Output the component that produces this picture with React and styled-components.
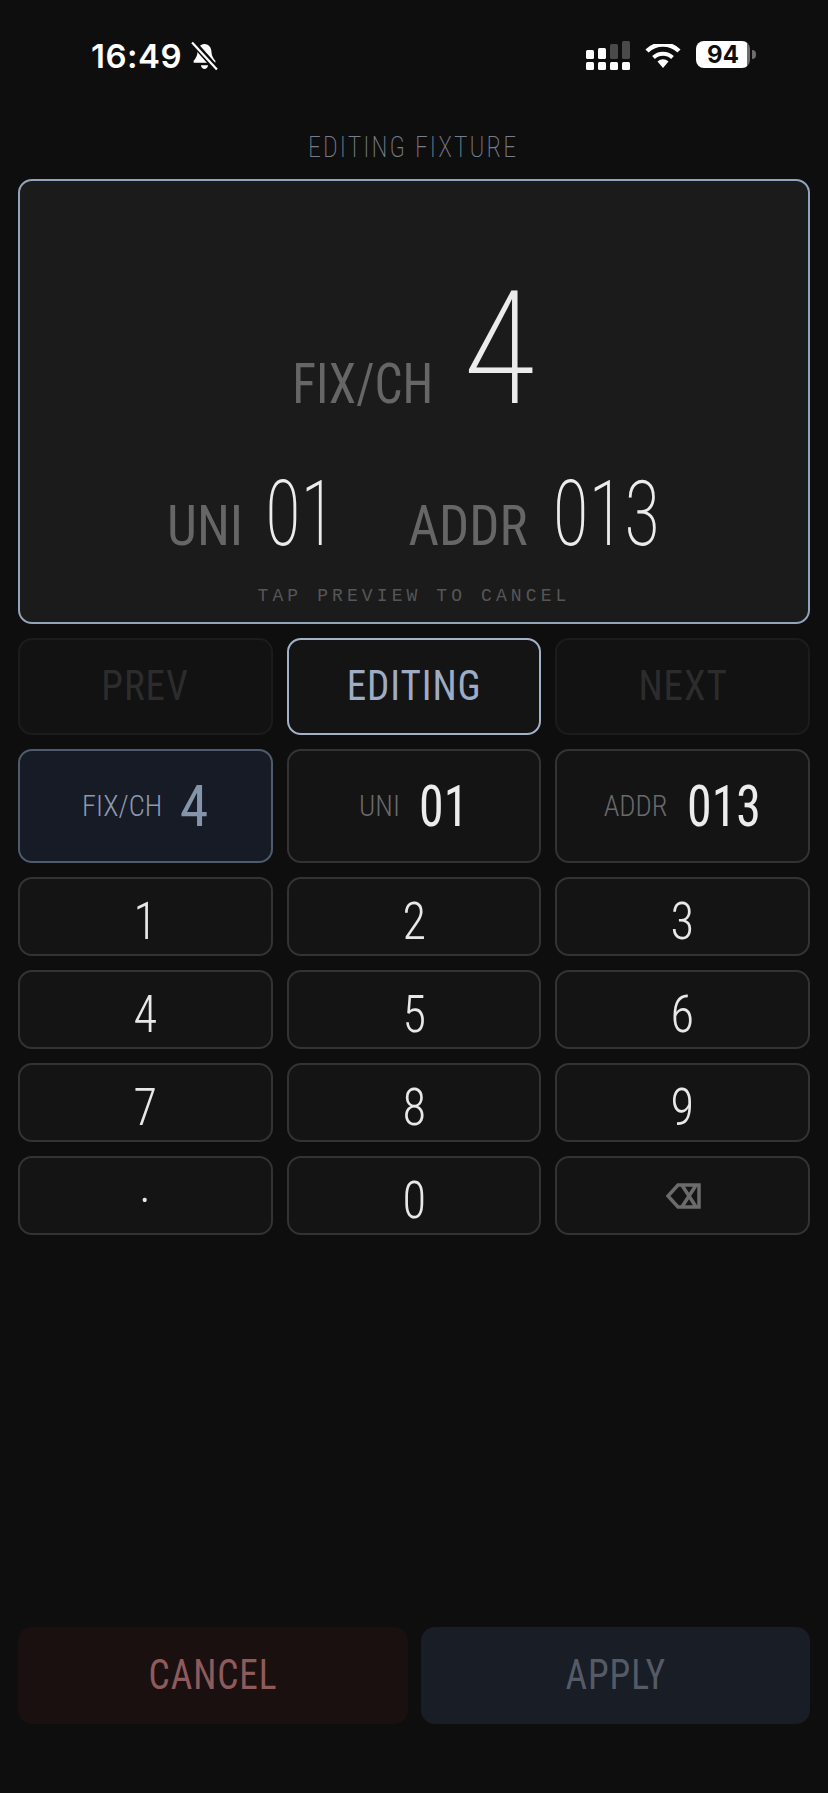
import React from 'react';
import styled, { createGlobalStyle, css } from 'styled-components';

const GlobalStyle = createGlobalStyle`
  body, html, #root {
    margin: 0;
    padding: 0;
    height: 100%;
    width: 100%;
    background: #0e0e0f;
  }
`;

const condensed = css`
  font-family: 'Roboto', 'Open Sans', sans-serif;
  font-stretch: 75%;
`;

// Roboto at its narrowest is still wider than the app's font, so squeeze the
// glyphs and pull the box in by $trim to keep the gaps honest.
const squeezed = css`
  display: inline-block;
  transform: scaleX(${(p) => p.$sx || 1});
  margin: 0 ${(p) => -(p.$trim || 0)}px;
`;

const Screen = styled.div`
  height: 1793px;
  box-sizing: border-box;
  padding: 0 18px 69px;
  display: flex;
  flex-direction: column;
  background: #0e0e0f;
  overflow: hidden;
`;

const StatusBar = styled.div`
  height: 134px;
  box-sizing: border-box;
  padding: 41px 78px 0 91px;
  margin: 0 -18px;
  display: flex;
  justify-content: space-between;
  align-items: flex-start;
`;

const StatusGroup = styled.div`
  display: flex;
  align-items: center;
  gap: ${(p) => p.$gap}px;
`;

const Clock = styled.span`
  font-family: 'Inter', sans-serif;
  font-weight: 600;
  font-size: 33px;
  line-height: 30px;
  letter-spacing: 0.5px;
  color: #fff;
`;

const Battery = styled.div`
  position: relative;
  width: 54px;
  height: 27px;
  margin-bottom: 3px;
  border-radius: 8px;
  background: linear-gradient(90deg, #fff 0, #fff 94%, #6d6d6d 94%);
  display: flex;
  align-items: center;
  justify-content: center;
  font-family: 'Inter', sans-serif;
  font-weight: 700;
  font-size: 24px;
  color: #0e0e0f;

  &::after {
    content: '';
    position: absolute;
    right: -6px;
    top: 9px;
    width: 4px;
    height: 9px;
    border-radius: 0 4px 4px 0;
    background: #6d6d6d;
  }
`;

const Heading = styled.div`
  ${condensed}
  height: 45px;
  padding-right: 2px;
  text-align: center;
  font-size: 29px;
  font-weight: 200;
  line-height: 26px;
  letter-spacing: 2.3px;
  color: #777d89;
  transform: scaleX(0.89);
`;

const Preview = styled.div`
  height: 445px;
  box-sizing: border-box;
  border: 2px solid #93a3bb;
  border-radius: 14px;
  background: #1b1b1c;
  display: flex;
  flex-direction: column;
  align-items: center;
  padding-top: 89px;
`;

const PreviewRow = styled.div`
  display: flex;
  align-items: baseline;
  justify-content: center;
  gap: ${(p) => p.$gap}px;
  height: ${(p) => p.$height}px;
`;

const Pair = styled.div`
  display: flex;
  align-items: baseline;
  gap: ${(p) => p.$gap}px;
`;

const Label = styled.span`
  ${condensed}
  ${squeezed}
  font-size: ${(p) => p.$size}px;
  font-weight: ${(p) => p.$weight || 400};
  line-height: 1;
  color: ${(p) => p.$color || '#666667'};
`;

const Value = styled.span`
  ${condensed}
  ${squeezed}
  font-size: ${(p) => p.$size}px;
  font-weight: ${(p) => p.$weight || 200};
  line-height: 1;
  color: ${(p) => p.$color || '#ececec'};
`;

const Hint = styled.div`
  margin-top: auto;
  margin-bottom: 17px;
  font-family: 'Liberation Mono', monospace;
  font-size: 18px;
  line-height: 18px;
  letter-spacing: 4.1px;
  color: #565656;
`;

const Grid = styled.div`
  display: grid;
  grid-template-columns: repeat(3, 1fr);
  gap: 14px;
  margin-top: 14px;
`;

const Tile = styled.div`
  box-sizing: border-box;
  height: ${(p) => p.$height}px;
  border: 2px solid ${(p) => p.$border || '#333334'};
  border-radius: 14px;
  background: ${(p) => p.$bg || '#141415'};
  display: flex;
  align-items: center;
  justify-content: center;
  gap: ${(p) => p.$gap || 0}px;
`;

const NavText = styled.span`
  ${condensed}
  display: inline-block;
  padding-bottom: 4px;
  font-size: 43px;
  font-weight: 400;
  letter-spacing: 1px;
  transform: scaleX(0.91);
  color: ${(p) => p.$color};
`;

const Digit = styled.span`
  ${condensed}
  display: inline-block;
  padding: ${(p) => (p.$raised ? '0 0 23px' : '9px 0 0')};
  font-size: 51px;
  font-weight: 350;
  transform: scaleX(0.95);
  color: #e8e8e8;
`;

const Footer = styled.div`
  margin-top: auto;
  display: flex;
  gap: 13px;
`;

const ActionButton = styled.div`
  flex: 1;
  height: 97px;
  border-radius: 14px;
  background: ${(p) => p.$bg};
  display: flex;
  align-items: center;
  justify-content: center;
`;

const ActionText = styled.span`
  ${condensed}
  display: inline-block;
  padding-bottom: 4px;
  font-size: 43px;
  font-weight: 400;
  letter-spacing: 1px;
  transform: scaleX(0.87);
  color: ${(p) => p.$color};
`;

const Bell = () => (
  <svg width="29" height="30" viewBox="0 0 27 29">
    <path d="M13.5 3c-4.5 0-6.5 3.5-6.8 8-.2 3.500-1.700 5.500-3.700 8v2h21v-2c-2-2.500-3.500-4.500-3.700-8-.3-4.500-2.300-8-6.800-8z" fill="#fff" />
    <path d="M10 23.500h7c-.5 2.500-1.800 3.500-3.500 3.500S10.500 26 10 23.500z" fill="#fff" />
    <path d="M2 1l24 27" stroke="#0e0e0f" strokeWidth="6" />
    <path d="M1.500 1.500l24 26" stroke="#fff" strokeWidth="2.200" />
  </svg>
);

const Signal = () => (
  <svg width="44" height="30" viewBox="0 0 44 30">
    <g fill="#fff">
      <rect x="0" y="21" width="8" height="8" rx="1.500" />
      <rect x="12" y="21" width="8" height="8" rx="1.500" />
      <rect x="24" y="21" width="8" height="8" rx="1.500" />
      <rect x="36" y="21" width="8" height="8" rx="1.500" />
      <rect x="0" y="9" width="8" height="9" rx="1.500" />
      <rect x="12" y="7" width="8" height="11" rx="1.500" />
    </g>
    <g fill="#4a4a4a">
      <rect x="24" y="3" width="8" height="15" rx="1.500" />
      <rect x="36" y="0" width="8" height="18" rx="1.500" />
    </g>
  </svg>
);

const Wifi = () => (
  <svg width="38" height="24" viewBox="0 0 38 24">
    <path d="M19 24l-5.500-6.500a8 8 0 0 1 11 0z" fill="#fff" />
    <path d="M9.500 13.500a14 14 0 0 1 19 0" fill="none" stroke="#fff" strokeWidth="4" />
    <path d="M3 7a23 23 0 0 1 32 0" fill="none" stroke="#fff" strokeWidth="4.500" />
  </svg>
);

const BackspaceIcon = () => (
  <svg width="36" height="26" viewBox="0 0 36 26">
    <path d="M13 2h21v22H13L3 13z M17.500 3l13 20 M30.500 3l-13 20" fill="none" stroke="#6b6b6b" strokeWidth="3.500" />
  </svg>
);

const keys = ['1', '2', '3', '4', '5', '6', '7', '8', '9', '.', '0'];

export default function App() {
  return (
    <>
      <GlobalStyle />
      <Screen>
        <StatusBar>
          <StatusGroup $gap={8}>
            <Clock>16:49</Clock>
            <Bell />
          </StatusGroup>
          <StatusGroup $gap={14}>
            <Signal />
            <Wifi />
            <Battery>94</Battery>
          </StatusGroup>
        </StatusBar>

        <Heading>EDITING FIXTURE</Heading>

        <Preview>
          <PreviewRow $gap={29} $height={200}>
            <Label $size={56} $sx={0.885} $trim={9}>FIX/CH</Label>
            <Value $size={158} $sx={0.95} $trim={2}>4</Value>
          </PreviewRow>
          <PreviewRow $gap={72} $height={90}>
            <Pair $gap={20}>
              <Label $size={56} $sx={0.95} $trim={2}>UNI</Label>
              <Value $size={90} $sx={0.81} $trim={7}>01</Value>
            </Pair>
            <Pair $gap={24}>
              <Label $size={56} $sx={0.945} $trim={3.5}>ADDR</Label>
              <Value $size={90} $sx={0.82} $trim={11}>013</Value>
            </Pair>
          </PreviewRow>
          <Hint>TAP PREVIEW TO CANCEL</Hint>
        </Preview>

        <Grid>
          <Tile $height={97} $border="#1c1c1d" $bg="#121213">
            <NavText $color="#2c2c2d">PREV</NavText>
          </Tile>
          <Tile $height={97} $border="#a3b2c9">
            <NavText $color="#9eacc4">EDITING</NavText>
          </Tile>
          <Tile $height={97} $border="#1c1c1d" $bg="#121213">
            <NavText $color="#2c2c2d">NEXT</NavText>
          </Tile>
        </Grid>

        <Grid>
          <Tile $height={114} $gap={17} $border="#4f5b6c" $bg="#161b25">
            <Label $size={30} $weight={300} $sx={0.95} $trim={2} $color="#8c9ab0">FIX/CH</Label>
            <Value $size={58} $weight={400} $color="#8494ab">4</Value>
          </Tile>
          <Tile $height={114} $gap={19}>
            <Label $size={30} $weight={300} $sx={0.95} $trim={1} $color="#6a6a6b">UNI</Label>
            <Value $size={58} $weight={400} $sx={0.86} $trim={3.5}>01</Value>
          </Tile>
          <Tile $height={114} $gap={19}>
            <Label $size={30} $weight={300} $sx={0.95} $trim={1.5} $color="#6a6a6b">ADDR</Label>
            <Value $size={58} $weight={400} $sx={0.86} $trim={5.5}>013</Value>
          </Tile>
        </Grid>

        <Grid>
          {keys.map((k) => (
            <Tile key={k} $height={79}>
              <Digit $raised={k === '.'}>{k}</Digit>
            </Tile>
          ))}
          <Tile $height={79}>
            <BackspaceIcon />
          </Tile>
        </Grid>

        <Footer>
          <ActionButton $bg="#1b1010">
            <ActionText $color="#8e5b5d">CANCEL</ActionText>
          </ActionButton>
          <ActionButton $bg="#191d26">
            <ActionText $color="#555b66">APPLY</ActionText>
          </ActionButton>
        </Footer>
      </Screen>
    </>
  );
}
